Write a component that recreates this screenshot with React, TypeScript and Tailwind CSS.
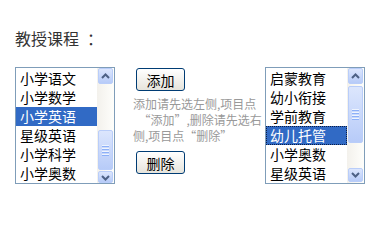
import React from "react";

const leftItems = ["小学语文", "小学数学", "小学英语", "星级英语", "小学科学", "小学奥数"];
const rightItems = ["启蒙教育", "幼小衔接", "学前教育", "幼儿托管", "小学奥数", "星级英语"];

const Arrow = ({ up }: { up?: boolean }) => (
  <svg width="9" height="6" viewBox="0 0 9 6">
    <polyline
      points={up ? "1,5 4.5,1.5 8,5" : "1,1 4.5,4.5 8,1"}
      fill="none"
      stroke="#4d6185"
      strokeWidth="2"
    />
  </svg>
);

const Grip = () => (
  <div className="flex flex-col gap-[1px]">
    {[0, 1, 2, 3].map((i) => (
      <div key={i} className="w-[7px] h-[1px] bg-[#eef4fe] border-b border-[#8cb0f8] box-content" />
    ))}
  </div>
);

const btnCls =
  "flex items-center justify-center rounded-[2px] border border-[#b9cdf9] bg-gradient-to-b from-[#dce6fd] to-[#b7cbf8]";

interface ScrollProps {
  before: string;
  thumb: string;
  down: string;
}

const Scrollbar = ({ before, thumb, down }: ScrollProps) => (
  <div className="w-[17px] h-full flex flex-col bg-gradient-to-r from-[#f3f1ec] to-[#fefefb] px-[1px]">
    <div className={`${btnCls} h-[16px]`}>
      <Arrow up />
    </div>
    <div className={before} />
    <div className={`${btnCls} ${thumb}`}>
      <Grip />
    </div>
    <div className="flex-1" />
    <div className={`${btnCls} ${down} items-start pt-[3px]`}>
      <Arrow />
    </div>
  </div>
);

interface ListProps {
  items: string[];
  selected: number;
  focused?: boolean;
  children: React.ReactNode;
}

const ListBox = ({ items, selected, focused, children }: ListProps) => (
  <div className="w-[100px] h-[117px] border border-[#7f9db9] bg-white flex">
    <div className="flex-1 pt-[1px] overflow-hidden">
      {items.map((it, i) => (
        <div
          key={it + i}
          className={
            i === selected
              ? `h-[19px] leading-[17px] pl-[3px] bg-[#316ac5] text-white border ${
                  focused ? "border-dotted border-[#0b1d45]" : "border-transparent"
                }`
              : "h-[19px] leading-[17px] pl-[3px] text-black border border-transparent"
          }
        >
          {it}
        </div>
      ))}
    </div>
    {children}
  </div>
);

const XpButton = ({ label }: { label: string }) => (
  <button className="ml-[3px] w-[49px] h-[23px] rounded-[3px] border border-[#003c74] bg-gradient-to-b from-white to-[#e6e4dc] text-[14px] leading-[20px] text-black">
    {label}
  </button>
);

export default function App() {
  return (
    <div className="w-[380px] h-[222px] bg-white pl-[15px] pt-[28px] font-['Noto_Sans_CJK_SC','Liberation_Sans',sans-serif]">
      <div className="text-[16px] leading-[20px] text-[#333]">
        教授课程<span className="ml-[8px]">：</span>
      </div>
      <div className="mt-[19px] flex items-start text-[14px]">
        <ListBox items={leftItems} selected={2}>
          <Scrollbar before="h-[47px]" thumb="h-[40px] mb-[1px]" down="h-[12px]" />
        </ListBox>
        <div className="ml-[18px] w-[132px] flex flex-col pt-[1px]">
          <XpButton label="添加" />
          <div className="mt-[5px] text-[12px] leading-[16px] text-[#999] whitespace-nowrap">
            添加请先选左侧,项目点
            <br />
            &nbsp;&nbsp;“添加”,删除请先选右
            <br />
            侧,项目点“删除”
          </div>
          <div className="mt-[7px]">
            <XpButton label="删除" />
          </div>
        </div>
        <ListBox items={rightItems} selected={3} focused>
          <Scrollbar before="h-[2px]" thumb="h-[57px]" down="h-[14px] mb-[1px]" />
        </ListBox>
      </div>
    </div>
  );
}
